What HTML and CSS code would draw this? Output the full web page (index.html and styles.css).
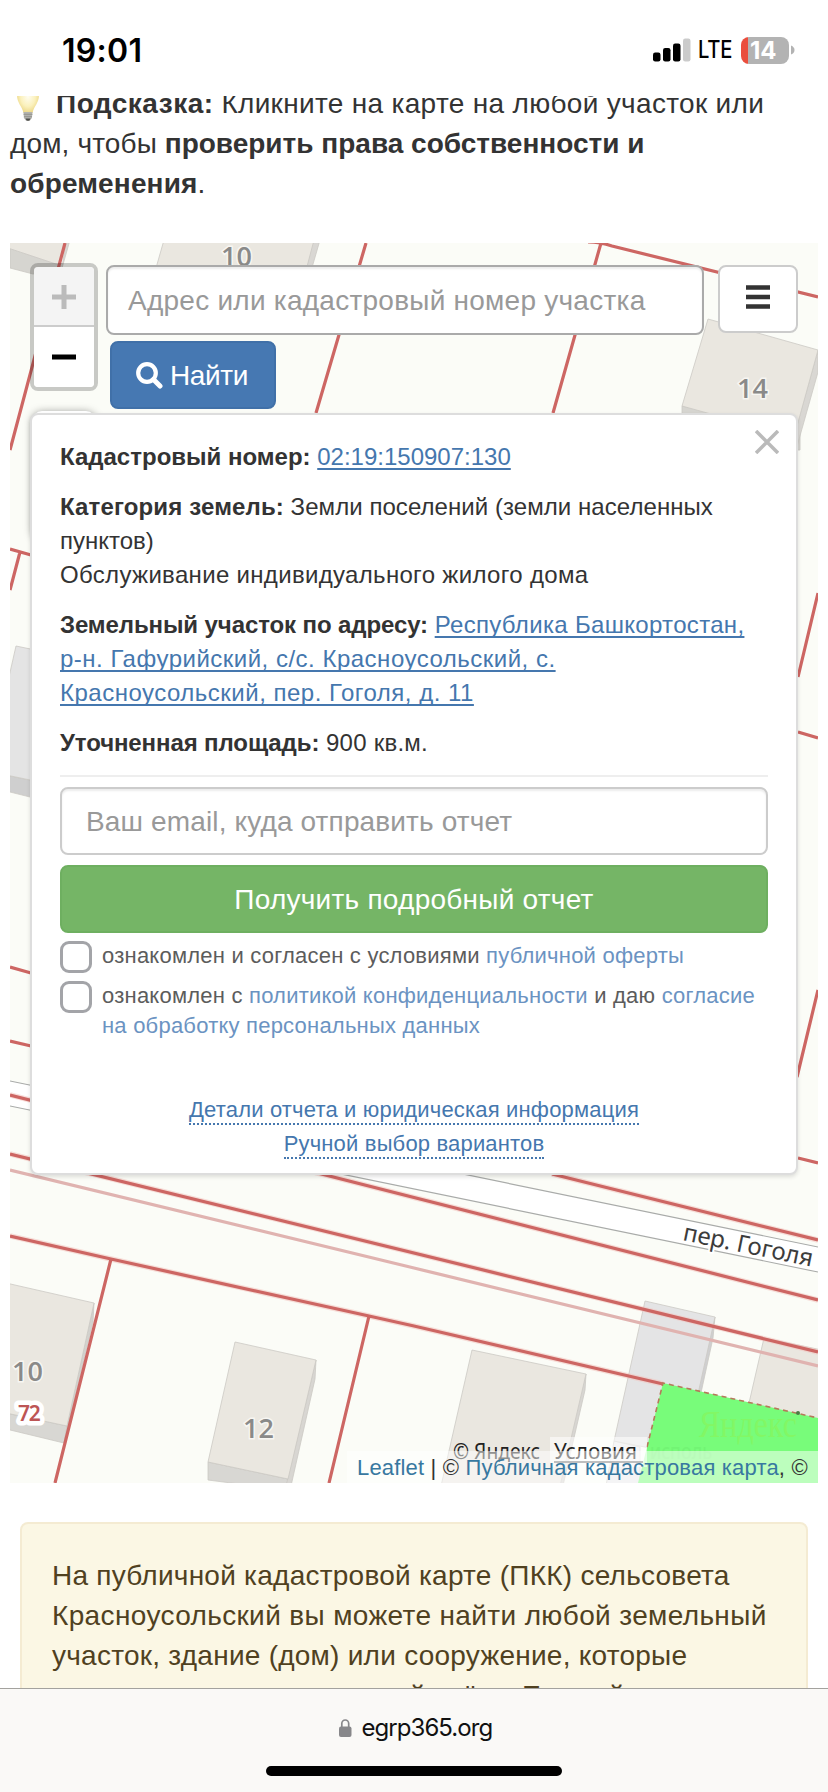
FILE: index.html
```html
<!DOCTYPE html>
<html lang="ru">
<head>
<meta charset="utf-8">
<title>Публичная кадастровая карта</title>
<link rel="stylesheet" href="styles.css">
</head>
<body>
<div class="screen">
  <header class="status">
    <span class="time">19:01</span>
    <div class="indicators">
      <svg class="signal" width="38" height="24" viewBox="0 0 38 24">
        <rect x="0" y="14.500" width="7.500" height="9" rx="2.200"/>
        <rect x="10" y="10" width="7.500" height="13.500" rx="2.200"/>
        <rect x="20" y="5.500" width="7.500" height="18" rx="2.200"/>
        <rect x="30" y="0.500" width="7.500" height="23" rx="2.200" fill="#cbcbcb"/>
      </svg>
      <span class="lte">LTE</span>
      <div class="battery"><span>14</span></div>
      <svg class="nub" width="4" height="10" viewBox="0 0 4 10"><path d="M0 0.500Q3.500 2 3.500 5T0 9.500Z" fill="#b3b3b3"/></svg>
    </div>
  </header>

  <p class="hint"><svg class="bulb" width="24" height="38" viewBox="0 0 24 38">
      <defs><radialGradient id="glow" cx=".5" cy=".45" r=".6"><stop offset="0" stop-color="#fffdf0"/><stop offset=".55" stop-color="#fbf1bd"/><stop offset="1" stop-color="#e9d27b"/></radialGradient></defs>
      <path d="M12 0C4 0 1 6 1 12c0 8 5 11 6.500 18h9c1.500-7 6.500-10 6.500-18C23 6 20 0 12 0z" fill="url(#glow)"/>
      <path d="M7.500 29h9l-.6 6-2 2.500h-4l-2-2.500z" fill="#b3b3af"/>
      <path d="M7.500 31.300h9M8 33.700h8" stroke="#8a8a85" stroke-width=".8"/><path d="M9.500 35.500h5l-1.200 2.300h-2.600z" fill="#4c4c48"/>
    </svg><b class="ls5">Подсказка:</b> <span class="ls3">Кликните на карте на любой участок или</span><br>
    <span class="ls1">дом, чтобы</span> <b>проверить права собственности и</b><br>
    <b class="ls1">обременения</b>.</p>

  <main class="map">
    <svg class="tiles" viewBox="10 243 808 1240" width="808" height="1240">
      <rect x="10" y="243" width="808" height="1240" fill="#fbfcf7"/>
      <!-- road -->
      <path d="M10 1081L818 1247V1272L10 1106Z" fill="#fff"/>
      <path d="M10 1081L818 1247M10 1106L818 1272" stroke="#a9aba9" stroke-width="1.200"/>
      <!-- buildings -->
      <g stroke-width=".8" stroke="#cbc9c4">
        <path d="M10 248L63 264 60 268 33 274 10 268Z" fill="#d6d5d0"/>
        <path d="M66 240H70L62 268Z" fill="#d9d7d3"/>
        <path d="M8 240H66L59 265 8 248Z" fill="#eae7e0"/>
        <path d="M164 240H315L305 275H154Z" fill="#eae7e0"/>
        <path d="M314 240H320L309 278H304Z" fill="#d9d7d3"/>
        <path d="M682 406L800 430V450H682Z" fill="#d6d5d0"/>
        <path d="M818 350V372L796 450H790Z" fill="#d9d7d3"/>
        <path d="M708 319L818 350 794 437 682 406Z" fill="#eae7e0"/>
        <path d="M6 775L34 781V798L6 791Z" fill="#cfcfcf"/>
        <path d="M6 690L16 646 40 651V782L6 775Z" fill="#e4e4e4"/>
        <path d="M6 1413L67 1426 64 1443 6 1429Z" fill="#d8d7d3"/>
        <path d="M94 1303L93 1322 64 1443 67 1426Z" fill="#d3d2ce"/>
        <path d="M6 1283L94 1303 67 1426 6 1413Z" fill="#eae7e0"/>
        <path d="M208 1462L288 1479 286 1490 208 1480Z" fill="#d8d7d3"/>
        <path d="M316 1360L315 1379 291 1486 286 1486Z" fill="#d8d6d2"/>
        <path d="M235 1342L316 1360 288 1479 208 1462Z" fill="#eae7e0"/>
        <path d="M586 1374L585 1390 562 1490 552 1490Z" fill="#d8d6d2"/>
        <path d="M472 1350L586 1374 560 1486H441Z" fill="#eae7e0"/>
        <path d="M715 1317L713 1338 699 1402 690 1402Z" fill="#cfcfd0"/>
        <path d="M614 1441L640 1447V1486H606Z" fill="#e9e9ea"/>
        <path d="M645 1301L715 1317 690 1430 660 1450 614 1441Z" fill="#e4e4e5"/>
        <path d="M764 1338L822 1350V1425L749 1403Z" fill="#eae7e0"/>
      </g>
      <!-- parcel borders -->
      <g fill="none" stroke="#f2c4c0" stroke-width="5.500" opacity=".55">
        <path d="M10 1154L818 1352M10 1236L111 1259 369 1316 414 1326 663 1384M10 1095L818 1300M552 1174L818 1240"/>
      </g>
      <g class="border">
        <path d="M65 243L10 450M366 243L316 413M601 243L553 413M588 242Q600 242 612 246L818 297"/>
        <path d="M10 549L31 555M20 552L10 590M818 593L798 677M798 732L818 738M818 990L797 1077"/>
        <path d="M10 967L31 973M10 1041L31 1046"/>
        <path d="M10 1095L818 1300M552 1174L818 1240M798 1158L818 1163M10 1154L818 1352"/>
        <path d="M10 1236L111 1259 369 1316 414 1326 663 1384M111 1259L55 1483M369 1316L329 1483"/>
      </g>
      <path d="M10 1170L414 1268 818 1366" fill="none" stroke="#e0b3b0" stroke-width="3.200"/>
      <!-- selected parcel -->
      <path d="M663 1383L818 1418V1483H638L647 1447Z" fill="#78fc7a"/>
      <path d="M647 1447L663 1383 818 1418" fill="none" stroke="#b5795a" stroke-width="1.600" stroke-dasharray="5 4"/>
      <circle cx="798" cy="1413" r="2" fill="#4b7a45"/>
      <text class="logo" x="699" y="1437" textLength="98" lengthAdjust="spacingAndGlyphs">Яндекс</text>
      <!-- labels -->
      <g class="house">
        <text x="221" y="266">10</text>
        <text x="737" y="398">14</text>
        <text x="12" y="1381">10</text>
        <text x="243" y="1438">12</text>
      </g>
      <text class="parcel" x="18" y="1421">72</text>
      <text class="street" transform="translate(682 1240) rotate(11.600)" x="0" y="0">пер. Гоголя</text>
      <!-- tile provider copyright -->
      <rect x="550" y="1437" width="97" height="30" fill="#fff" opacity=".55"/>
      <text class="yandex" x="453" y="1459" textLength="87" lengthAdjust="spacingAndGlyphs">© Яндекс</text>
      <text class="yandex" x="554" y="1459" textLength="83" lengthAdjust="spacingAndGlyphs">Условия</text>
      <path d="M554 1462H643" stroke="#555" stroke-width="1.500"/>
      <text class="yandex ghost" x="650" y="1459" textLength="62" lengthAdjust="spacingAndGlyphs">исполь</text>
    </svg>

    <div class="toolbar">
      <div class="zoom">
        <div class="zoom-in"><svg width="24" height="24"><path d="M0 12H24M12 0V24" stroke="#bbb" stroke-width="5"/></svg></div>
        <div class="zoom-out"><svg width="24" height="24"><path d="M0 12H24" stroke="#000" stroke-width="5"/></svg></div>
      </div>
      <div class="search">
        <div class="field search-field ls2">Адрес или кадастровый номер участка</div>
        <div class="find"><svg width="27" height="27" viewBox="0 0 27 27"><circle cx="11" cy="11" r="8.800" fill="none" stroke="#fff" stroke-width="4.200"/><path d="M17.500 17.500L24 24" stroke="#fff" stroke-width="5" stroke-linecap="round"/></svg><span>Найти</span></div>
      </div>
      <div class="menu"><svg width="24" height="24"><path d="M0 2.500H24M0 12H24M0 21.500H24" stroke="#333" stroke-width="4.600"/></svg></div>
    </div>
    <div class="under"></div>

    <section class="popup">
      <svg class="close" width="24" height="24"><path d="M1 1L23 23M23 1L1 23" stroke="#000" stroke-opacity=".27" stroke-width="3.600"/></svg>
      <p><b>Кадастровый номер:</b> <a class="u">02:19:150907:130</a></p>
      <p><b class="ls1">Категория земель:</b> <span class="ls0">Земли поселений (земли населенных</span><br>пунктов)<br><span class="ls3">Обслуживание индивидуального жилого дома</span></p>
      <p><b class="lsn">Земельный участок по адресу:</b> <a class="u"><span class="ls3">Республика Башкортостан,</span><br><span class="ls5">р-н. Гафурийский, с/с. Красноусольский, с.<br>Красноусольский, пер. Гоголя, д. 11</span></a></p>
      <p><b class="lsn">Уточненная площадь:</b> <span class="ls2">900 кв.м.</span></p>
      <hr>
      <div class="field email ls1">Ваш email, куда отправить отчет</div>
      <div class="submit ls2">Получить подробный отчет</div>
      <div class="check"><i></i><span>ознакомлен и согласен с условиями <a>публичной оферты</a></span></div>
      <div class="check"><i></i><span>ознакомлен с <a>политикой конфиденциальности</a> и даю <a>согласие<br>на обработку персональных данных</a></span></div>
      <div class="more"><div><a>Детали отчета и юридическая информация</a></div><div><a>Ручной выбор вариантов</a></div></div>
    </section>

    <div class="credit"><a>Leaflet</a> | © <a>Публичная кадастровая карта</a>, ©</div>
  </main>

  <article class="note">
    <span class="ls2">На публичной кадастровой карте (ПКК) сельсовета</span><br>
    <span class="ls4">Красноусольский вы можете найти любой земельный</span><br>
    <span class="ls2">участок, здание (дом) или сооружение, которые</span><br>
    <span class="ls1">поставлены на кадастровый учёт в Единый</span>
  </article>

  <footer class="bar">
    <div class="address"><svg width="13" height="18" viewBox="0 0 13 18"><rect x="0" y="7.500" width="12.500" height="10.500" rx="2" fill="#87878a"/><path d="M2.800 8V4.600a3.450 3.600 0 0 1 6.900 0V8" fill="none" stroke="#87878a" stroke-width="1.700"/></svg><span>egrp365.org</span></div>
    <div class="home"></div>
  </footer>
</div>
</body>
</html>
```
FILE: styles.css
```css
* { box-sizing: border-box; }
body { margin: 0; background: #fff; color: #333; font: 28px/40px "Liberation Sans", Arial, sans-serif; }
p { margin: 0; }
a { color: #4577ae; }
svg { display: block; }
.ls0 { letter-spacing: .06px; }
.ls1 { letter-spacing: .14px; }
.ls2 { letter-spacing: .25px; }
.ls3 { letter-spacing: .32px; }
.ls4 { letter-spacing: .37px; }
.ls5 { letter-spacing: .5px; }
.lsn { letter-spacing: -.1px; }

.screen { width: 828px; height: 1792px; overflow: hidden; display: flex; flex-direction: column; white-space: nowrap; }
.screen > * { flex: none; }

.status { height: 96px; background: #fff; position: relative; z-index: 2; display: flex; justify-content: space-between; padding: 0 33px 0 62px; }
.time { font: 600 32px/38px Inter, sans-serif; letter-spacing: .3px; color: #000; padding-top: 32px; }
.indicators { display: flex; height: 28px; margin-top: 36px; align-items: center; }
.lte { font: 500 24px/28px Inter, sans-serif; letter-spacing: -.3px; color: #000; width: 43px; margin-left: 7px; transform: scaleX(.84); transform-origin: left; }
.battery { width: 48px; height: 27px; border-radius: 8px; background: linear-gradient(90deg, #ea4e3d 7px, #b3b3b3 7px); font: 700 24px/28px Inter, sans-serif; color: #fff; padding-left: 9px; }
.nub { margin-left: 2px; }

.hint { margin: -12px 0 39px; padding-left: 10px; height: 120px; }
.bulb { display: inline-block; vertical-align: top; margin: -1px 16px 0 6px; }

.map { position: relative; margin: 0 10px; height: 1240px; padding: 20px 20px 0 20px; overflow: hidden; }
.tiles { position: absolute; left: 0; top: 0; }
.border { fill: none; stroke: #cd6663; stroke-width: 3.200; }
.house { font: 600 27px "Open Sans", sans-serif; fill: #8a8a89; stroke: #f7f6f2; stroke-width: 3px; paint-order: stroke; }
.parcel { font: 600 21px "Noto Sans", sans-serif; letter-spacing: -1.2px; fill: #bd5555; stroke: #fff; stroke-width: 9px; stroke-linejoin: round; paint-order: stroke; }
.street { font: 24px "Noto Sans", sans-serif; letter-spacing: -.1px; fill: #3c3c3c; stroke: #fff; stroke-width: 4px; paint-order: stroke; }
.logo { font: 38px "Liberation Serif", serif; fill: #82f765; }
.yandex { font: 22px "Noto Sans", sans-serif; fill: #222; }
.ghost { fill: #72f474; }

.toolbar { position: relative; height: 148px; display: grid; grid-template-columns: 68px 598px 80px; column-gap: 8px; align-items: start; }
.menu { justify-self: start; margin-left: 6px; width: 80px; height: 68px; margin-top: 2px; background: #fff; border: 2px solid #ccc; border-radius: 8px; display: flex; justify-content: center; padding-top: 18px; }
.zoom { height: 128px; border: 4px solid rgba(0,0,0,.2); border-radius: 8px; background-clip: padding-box; overflow: hidden; }
.zoom > div { display: flex; align-items: center; justify-content: center; height: 60px; background: #fff; }
.zoom .zoom-in { background: #f4f4f4; border-bottom: 2px solid #ccc; padding-top: 2px; }
.field { height: 68px; background: #fff; border: 2px solid #ccc; border-radius: 8px; box-shadow: inset 0 2px 2px rgba(0,0,0,.075); color: #999; line-height: 64px; }
.search-field { height: 70px; margin-top: 2px; border-color: #aaa; padding-left: 20px; line-height: 68px; }
.find { margin: 6px 0 0 4px; width: 166px; height: 68px; border-radius: 8px; background: #4678b2; border: 2px solid #4070a8; color: #fff; display: flex; align-items: center; padding-left: 24px; gap: 7px; }
.find span { letter-spacing: -.4px; padding-top: 2px; }

.under { position: absolute; left: 22px; top: 168px; width: 64px; height: 128px; background: #fff; border-radius: 10px; box-shadow: 0 1px 8px rgba(0,0,0,.4); }

.popup { position: relative; width: 768px; height: 762px; margin-top: 2px; padding: 25px 28px 0; background: #fff; border: 2px solid #ddd; border-radius: 8px; box-shadow: 0 2px 4px rgba(0,0,0,.12); font-size: 24px; line-height: 34px; }
.close { position: absolute; right: 17px; top: 15px; }
.popup p { margin-bottom: 16px; }
.u { text-decoration: underline; text-decoration-thickness: 1.600px; text-underline-offset: 3px; text-decoration-skip-ink: none; }
hr { margin: -1px 0 10px; border: 0; height: 2px; background: #eee; }
.email { padding-left: 24px; font-size: 28px; height: 68px; line-height: 66px; }
.submit { margin: 10px 0 7px; height: 68px; border-radius: 8px; background: #75b566; border: 2px solid #6eaf60; color: #fff; font-size: 28px; line-height: 66px; text-align: center; }
.check { display: flex; font-size: 22px; line-height: 30px; letter-spacing: .22px; color: #5c5c5c; min-height: 40px; }
.check span { padding-top: 1px; }
.check a { color: #6b93c2; }
.check i { flex: none; width: 32px; height: 32px; margin: 1px 10px 0 0; border: 3px solid #a3a4a8; border-radius: 9px; }
.more { margin-top: 52px; text-align: center; font-size: 22px; letter-spacing: .17px; }
.more a { display: inline-block; line-height: 29px; height: 30px; border-bottom: 2px dotted #4577ae; }
.more div { height: 34px; line-height: 34px; }

.credit { position: absolute; right: 0; bottom: 0; width: 471px; height: 32px; padding-left: 10px; background: rgba(255,255,255,.5); font-size: 22px; line-height: 33px; letter-spacing: .18px; }
.credit a { color: #3878a0; }

.note { margin: 39px 20px 0; height: 300px; padding: 32px 30px 0; background: #fbf7e4; border: 2px solid #f4ebd2; border-radius: 8px; color: #50411f; }

.bar { position: fixed; left: 0; top: 1688px; width: 828px; height: 104px; background: #faf9f7; border-top: 1.500px solid #a3a29e; z-index: 3; display: flex; flex-direction: column; align-items: center; }
.address { display: flex; align-items: center; gap: 10px; height: 30px; margin: 24px 0 0 2px; font: 24px/30px Inter, sans-serif; color: #111; }
.address span { width: 130px; letter-spacing: -.95px; }
.home { margin-top: 23px; width: 296px; height: 10px; border-radius: 5px; background: #000; }
```
